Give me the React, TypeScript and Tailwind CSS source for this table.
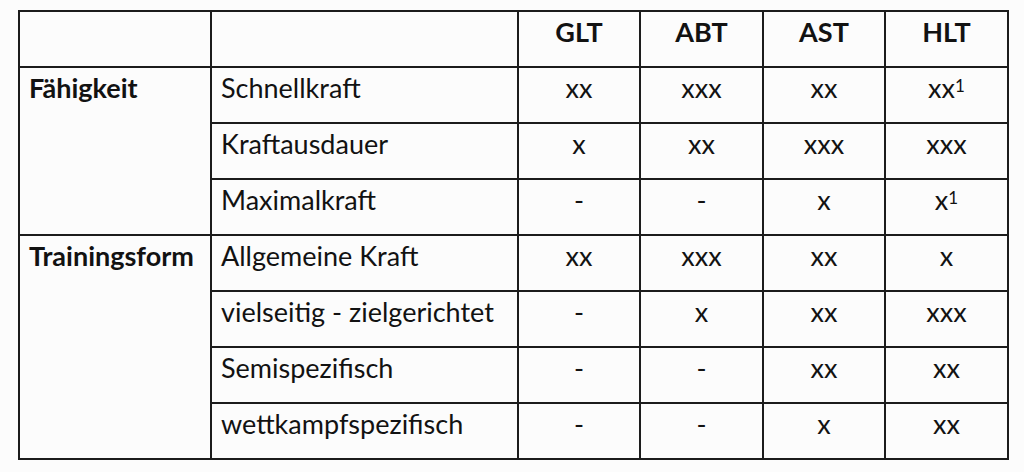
import React from "react";

const rows1 = [
  ["Schnellkraft", "xx", "xxx", "xx", "xx1"],
  ["Kraftausdauer", "x", "xx", "xxx", "xxx"],
  ["Maximalkraft", "-", "-", "x", "x1"],
];
const rows2 = [
  ["Allgemeine Kraft", "xx", "xxx", "xx", "x"],
  ["vielseitig - zielgerichtet", "-", "x", "xx", "xxx"],
  ["Semispezifisch", "-", "-", "xx", "xx"],
  ["wettkampfspezifisch", "-", "-", "x", "xx"],
];

function Val({ v }: { v: string }) {
  if (v.endsWith("1")) {
    return (
      <span>
        {v.slice(0, -1)}
        <sup className="text-[17px] relative -top-[6px]">1</sup>
      </span>
    );
  }
  return <span>{v}</span>;
}

const cell = "border-2 border-[#1c1c1c] align-top";

function Row({ r, group, span }: { r: string[]; group?: string; span?: number }) {
  return (
    <tr className="h-[56px]">
      {group !== undefined && (
        <td rowSpan={span} className={`${cell} pl-[9px] pt-[4px] font-bold`}>
          {group}
        </td>
      )}
      <td className={`${cell} pl-[9px] pt-[4px] whitespace-nowrap`}>{r[0]}</td>
      {r.slice(1).map((v, i) => (
        <td key={i} className={`${cell} text-center pt-[4px]`}>
          <Val v={v} />
        </td>
      ))}
    </tr>
  );
}

export default function App() {
  return (
    <div
      className="w-[1024px] h-[472px] bg-[#fcfcfc] pt-[10px] pl-[18px] text-[#121212]"
      style={{ fontFamily: "Lato, 'Open Sans', sans-serif" }}
    >
      <table className="border-collapse table-fixed w-[989px] text-[27px] leading-[32px]">
        <colgroup>
          <col className="w-[192px]" />
          <col className="w-[307px]" />
          <col className="w-[122px]" />
          <col className="w-[123px]" />
          <col className="w-[122px]" />
          <col className="w-[123px]" />
        </colgroup>
        <tbody>
          <tr className="h-[56px]">
            <td className={cell}></td>
            <td className={cell}></td>
            {["GLT", "ABT", "AST", "HLT"].map((h) => (
              <td key={h} className={`${cell} text-center pt-[4px] font-bold`}>
                {h}
              </td>
            ))}
          </tr>
          {rows1.map((r, i) => (
            <Row key={i} r={r} group={i === 0 ? "Fähigkeit" : undefined} span={3} />
          ))}
          {rows2.map((r, i) => (
            <Row key={i} r={r} group={i === 0 ? "Trainingsform" : undefined} span={4} />
          ))}
        </tbody>
      </table>
    </div>
  );
}
